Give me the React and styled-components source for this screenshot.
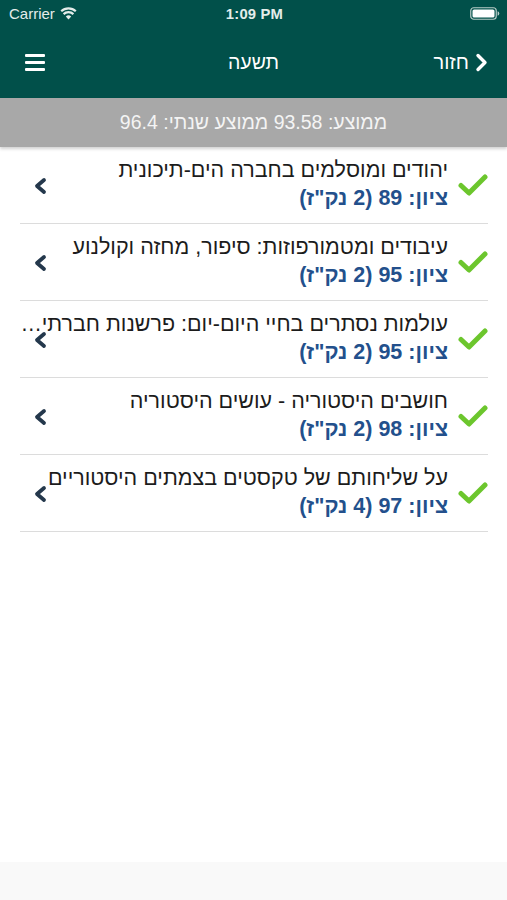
import React from "react";
import styled, { createGlobalStyle } from "styled-components";

const GlobalStyle = createGlobalStyle`
  html, body {
    margin: 0;
    padding: 0;
    background: #ffffff;
  }
  body {
    font-family: "Liberation Sans", Arial, sans-serif;
  }
`;

const Screen = styled.div`
  height: 900px;
  width: 507px;
  display: flex;
  flex-direction: column;
  background: #ffffff;
  overflow: hidden;
`;

const Header = styled.div`
  background-color: #01504a;
  color: white;
`;

const StatusBar = styled.div`
  height: 27px;
  display: grid;
  grid-template-columns: 1fr auto 1fr;
  align-items: center;
  padding: 0 7px 0 9px;
  font-size: 15px;
  color: #e4ecea;
`;

const Carrier = styled.div`
  display: flex;
  align-items: center;
  gap: 5px;
`;

const Clock = styled.div`
  font-weight: bold;
  font-size: 14.8px;
  letter-spacing: 0.2px;
`;

const Battery = styled.div`
  justify-self: end;
  display: flex;
  align-items: center;
`;

const Navbar = styled.div`
  height: 71px;
  display: flex;
  align-items: center;
  justify-content: space-between;
  padding: 0 19px 0 25px;
  position: relative;
`;

const Title = styled.div`
  position: absolute;
  left: 0;
  right: 0;
  text-align: center;
  font-size: 19.5px;
  pointer-events: none;
`;

const Burger = styled.div`
  display: flex;
  flex-direction: column;
  gap: 4px;
  width: 20px;
  span {
    display: block;
    height: 3px;
    background: white;
    border-radius: 1px;
  }
`;

const Back = styled.div`
  display: flex;
  align-items: center;
  gap: 6px;
  font-size: 20px;
`;

const AverageBar = styled.div`
  height: 49px;
  background-color: #a8a8a8;
  color: #f4f4f4;
  font-size: 19.5px;
  display: flex;
  align-items: center;
  justify-content: center;
  box-shadow: 0 2px 3px rgba(0, 0, 0, 0.18);
  position: relative;
  z-index: 1;
`;

const List = styled.div`
  flex: 1;
  display: flex;
  flex-direction: column;
  padding: 0 19px 0 20px;
`;

const Row = styled.div`
  direction: rtl;
  height: 76px;
  border-bottom: 1px solid #dcdcdc;
  display: flex;
  align-items: center;
  gap: 9px;
  position: relative;
`;

const Check = styled.div`
  width: 31px;
  flex-shrink: 0;
  display: flex;
  align-items: center;
  justify-content: center;
`;

const Texts = styled.div`
  flex: 1;
  min-width: 0;
  display: flex;
  flex-direction: column;
  gap: 3px;
  margin-top: -3px;
`;

const CourseName = styled.div`
  font-size: 21.5px;
  line-height: 25px;
  color: #1c1c1c;
  white-space: nowrap;
  overflow: hidden;
  text-overflow: ellipsis;
`;

const Grade = styled.div`
  font-size: 21.5px;
  line-height: 24px;
  font-weight: bold;
  color: #23508c;
`;

const Disclosure = styled.div`
  position: absolute;
  left: 12px;
  top: 50%;
  transform: translateY(-50%);
  margin-top: 1px;
  display: flex;
`;

const TabBar = styled.div`
  height: 38px;
  background: #f9f9f9;
`;

const courses = [
  { name: "יהודים ומוסלמים בחברה הים-תיכונית", grade: 89, points: 2 },
  { name: "עיבודים ומטמורפוזות: סיפור, מחזה וקולנוע", grade: 95, points: 2 },
  {
    name: "עולמות נסתרים בחיי היום-יום: פרשנות חברתית של התרבות",
    grade: 95,
    points: 2,
  },
  { name: "חושבים היסטוריה - עושים היסטוריה", grade: 98, points: 2 },
  { name: "על שליחותם של טקסטים בצמתים היסטוריים", grade: 97, points: 4 },
];

const WifiIcon = () => (
  <svg width="17" height="13" viewBox="0 0 17 13">
    <path d="M8.5 12.5 L5.8 9.4 A4 4 0 0 1 11.2 9.4 Z" fill="#e4ecea" />
    <path
      d="M3.6 7.1 A7 7 0 0 1 13.4 7.1"
      stroke="#e4ecea"
      strokeWidth="2.2"
      fill="none"
    />
    <path
      d="M1.2 4.3 A10.6 10.6 0 0 1 15.8 4.3"
      stroke="#e4ecea"
      strokeWidth="2.2"
      fill="none"
    />
  </svg>
);

const BatteryIcon = () => (
  <svg width="30" height="13" viewBox="0 0 30 13">
    <rect
      x="0.75"
      y="0.75"
      width="25.5"
      height="11.5"
      rx="3"
      stroke="#b8cbc7"
      strokeWidth="1.2"
      fill="none"
    />
    <rect x="2.5" y="2.5" width="22" height="8" rx="1.6" fill="#ffffff" />
    <path d="M27.6 4.3 Q29.3 4.6 29.3 6.5 Q29.3 8.4 27.6 8.7 Z" fill="#b8cbc7" />
  </svg>
);

const CheckIcon = () => (
  <svg width="30" height="24" viewBox="0 0 30 24">
    <path
      d="M3 12.5 L11 20 L27 4"
      stroke="#6cc62d"
      strokeWidth="5"
      strokeLinecap="round"
      strokeLinejoin="round"
      fill="none"
    />
  </svg>
);

const ChevronLeft = () => (
  <svg width="16" height="18" viewBox="0 0 16 18">
    <path
      d="M12 3 L5 9 L12 15"
      stroke="#24384c"
      strokeWidth="3.8"
      strokeLinecap="round"
      strokeLinejoin="round"
      fill="none"
    />
  </svg>
);

const ChevronRight = () => (
  <svg width="13" height="19" viewBox="0 0 13 19">
    <path
      d="M3 2.5 L10 9.5 L3 16.5"
      stroke="#ffffff"
      strokeWidth="3.4"
      strokeLinecap="round"
      strokeLinejoin="round"
      fill="none"
    />
  </svg>
);

const App = () => {
  return (
    <>
      <GlobalStyle />
      <Screen>
        <Header>
          <StatusBar>
            <Carrier>
              Carrier <WifiIcon />
            </Carrier>
            <Clock>1:09 PM</Clock>
            <Battery>
              <BatteryIcon />
            </Battery>
          </StatusBar>
          <Navbar>
            <Burger>
              <span />
              <span />
              <span />
            </Burger>
            <Title>תשעה</Title>
            <Back>
              <span>חזור</span>
              <ChevronRight />
            </Back>
          </Navbar>
        </Header>
        <AverageBar dir="rtl">ממוצע: 93.58 ממוצע שנתי: 96.4</AverageBar>
        <List>
          {courses.map((c, i) => (
            <Row key={i}>
              <Check>
                <CheckIcon />
              </Check>
              <Texts>
                <CourseName>{c.name}</CourseName>
                <Grade>
                  ציון: {c.grade} ({c.points} נק"ז)
                </Grade>
              </Texts>
              <Disclosure>
                <ChevronLeft />
              </Disclosure>
            </Row>
          ))}
        </List>
        <TabBar />
      </Screen>
    </>
  );
};

export default App;
